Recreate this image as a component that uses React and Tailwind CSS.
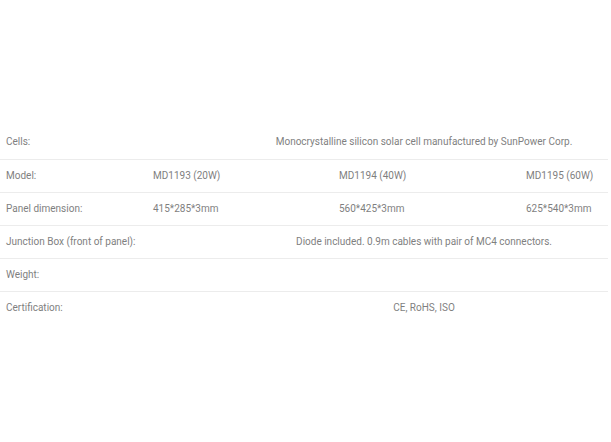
import React from "react";

const rows = [
  { label: "Cells:", span: "Monocrystalline silicon solar cell manufactured by SunPower Corp." },
  { label: "Model:", values: ["MD1193 (20W)", "MD1194 (40W)", "MD1195 (60W)"] },
  { label: "Panel dimension:", values: ["415*285*3mm", "560*425*3mm", "625*540*3mm"] },
  { label: "Junction Box (front of panel):", span: "Diode included. 0.9m cables with pair of MC4 connectors." },
  { label: "Weight:", values: ["", "", ""] },
  { label: "Certification:", span: "CE, RoHS, ISO" },
];

export default function App() {
  return (
    <div className="h-[442px] w-[611px] bg-white pt-[126px] font-['Roboto',sans-serif]">
      <div className="w-[608px] overflow-hidden">
        <table className="w-[701px] table-fixed border-collapse text-[10px] leading-none text-[#7f7f7f]">
          <colgroup>
            <col className="w-[147px]" />
            <col className="w-[186px]" />
            <col className="w-[187px]" />
            <col className="w-[181px]" />
          </colgroup>
          <tbody>
            {rows.map((row, i) => (
              <tr
                key={row.label}
                className={`h-[33px] ${i < rows.length - 1 ? "border-b border-[#ececec]" : ""}`}
              >
                <td className="px-[6px] align-middle whitespace-nowrap">{row.label}</td>
                {row.span ? (
                  <td colSpan={3} className="px-[6px] text-center align-middle whitespace-nowrap">
                    {row.span}
                  </td>
                ) : (
                  row.values.map((v, j) => (
                    <td key={j} className="px-[6px] align-middle whitespace-nowrap">
                      {v}
                    </td>
                  ))
                )}
              </tr>
            ))}
          </tbody>
        </table>
      </div>
    </div>
  );
}
